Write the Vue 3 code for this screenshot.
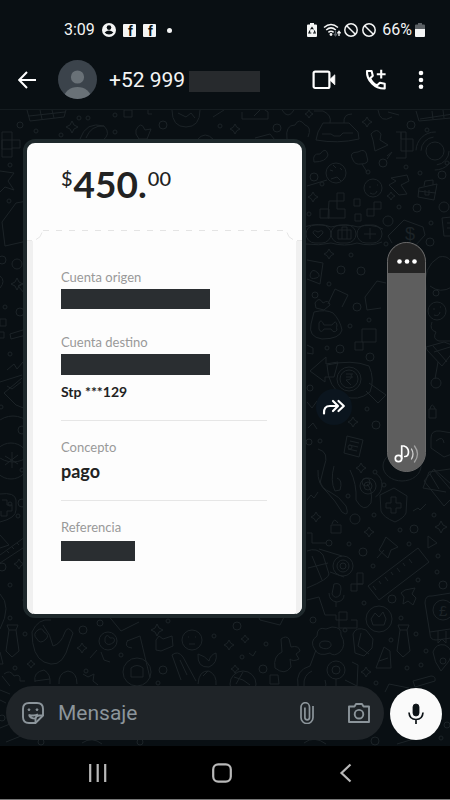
<script setup>
import { ref } from 'vue'

const message = ref('')
const volume = ref(100)

const circles = [
  [20, 125, 3], [36, 131, 2], [79, 118, 2], [88, 118, 2], [61, 135, 2], [115, 115, 2], [115, 132, 2], [163, 125, 4], [220, 126, 2], [277, 128, 4],
  [10, 165, 2], [9, 201, 2], [17, 264, 5], [2, 260, 4], [5, 307, 2], [20, 312, 4], [10, 354, 2], [1, 407, 2], [22, 430, 4], [22, 470, 2], [10, 504, 2], [22, 503, 4], [18, 516, 2], [2, 567, 4], [10, 585, 2], [25, 600, 2],
  [411, 125, 4], [427, 130, 2], [447, 163, 2], [406, 167, 2], [420, 173, 2], [442, 175, 4], [322, 184, 2], [314, 177, 4], [368, 172, 2], [383, 163, 4],
  [399, 207, 2], [417, 208, 4], [444, 207, 5], [388, 221, 5], [431, 223, 2], [430, 242, 4], [386, 244, 2], [309, 214, 2],
  [351, 255, 2], [341, 270, 4], [361, 271, 4], [329, 284, 2], [315, 295, 3], [357, 307, 4], [369, 320, 2], [350, 326, 2], [327, 348, 2], [340, 349, 4], [370, 357, 4], [310, 388, 3],
  [436, 293, 3], [436, 383, 5], [367, 409, 2], [320, 441, 2], [376, 425, 4], [309, 442, 3], [350, 447, 2], [366, 482, 4],
  [348, 496, 2], [384, 485, 2], [375, 472, 2], [355, 519, 5], [374, 515, 2], [414, 529, 4], [400, 530, 2], [434, 515, 2], [329, 543, 3], [349, 544, 2], [363, 552, 4], [409, 544, 2],
  [373, 566, 2], [418, 580, 2], [443, 585, 4], [392, 599, 4], [364, 603, 2], [437, 572, 2], [438, 556, 2], [401, 618, 2], [416, 634, 2], [345, 630, 2], [391, 640, 2], [313, 620, 3],
  [10, 618, 2], [25, 634, 2], [83, 630, 4], [100, 623, 3], [121, 655, 2], [163, 670, 4], [214, 636, 2], [237, 626, 4], [266, 644, 2], [263, 669, 4], [242, 657, 2], [15, 668, 2], [86, 671, 2],
  [376, 683, 2], [407, 668, 2], [421, 665, 2], [426, 651, 2], [158, 683, 2], [168, 621, 2], [41, 742, 3], [140, 742, 3], [375, 741, 4], [447, 725, 3], [441, 738, 2], [2, 718, 3]
]

const stars = [
  [72, 127, 6], [235, 129, 5], [309, 114, 4], [367, 122, 5], [313, 197, 5], [391, 196, 4], [329, 254, 5], [353, 422, 5], [361, 468, 5],
  [316, 517, 5], [369, 532, 5], [441, 527, 6], [17, 284, 6], [157, 630, 6], [82, 648, 5], [229, 645, 5], [245, 639, 4], [235, 669, 4], [31, 664, 4], [366, 672, 5], [19, 564, 5]
]

const ties = [[12, 626], [403, 626]]
const starPath = (x, y, r) =>
  `M${x} ${y - r}Q${x + 1} ${y - 1} ${x + r} ${y}Q${x + 1} ${y + 1} ${x} ${y + r}Q${x - 1} ${y + 1} ${x - r} ${y}Q${x - 1} ${y - 1} ${x} ${y - r}Z`
</script>

<template>
  <div class="screen">
    <header class="top">
      <div class="status">
        <div class="status-left">
          <span class="clock">3:09</span>
          <svg class="glyph" width="14" height="14" viewBox="0 0 14 14" aria-hidden="true">
            <circle cx="7" cy="7" r="7" fill="#f4f5f5" />
            <circle cx="7" cy="4.6" r="2.3" fill="#090f13" />
            <path d="M2.6 9.6Q7 5.6 11.4 9.6Q9.8 11.6 7 11.6T2.6 9.6Z" fill="#090f13" />
          </svg>
          <svg v-for="n in 2" :key="n" class="badge" width="13" height="13" viewBox="0 0 13 13" aria-hidden="true">
            <rect width="13" height="13" rx="1" fill="#f4f5f5" />
            <text x="5" y="12" class="badge-letter">f</text>
          </svg>
          <span class="dot"></span>
        </div>
        <div class="status-right">
          <svg width="10" height="14" viewBox="0 0 10 14" aria-hidden="true">
            <path d="M3 0h4v1.5h2q1 0 1 1V13q0 1-1 1H1q-1 0-1-1V2.500q0-1 1-1h2Z" fill="#f4f5f5" />
            <path d="M3.600 6.500L5 4.500l1.400 2M7.300 7.500L8.200 10H6M4.300 10H1.900L3 7.500" fill="none" stroke="#090f13" stroke-width="1.100" />
          </svg>
          <svg class="wifi" width="18" height="14" viewBox="0 0 18 14" fill="none" aria-hidden="true">
            <path d="M1 4.500Q8 -1.500 15 4.500M3.200 7Q8 2.800 12.800 7M5.400 9.400Q8 7.200 10.600 9.400" stroke="#f4f5f5" stroke-width="1.500" />
            <circle cx="8" cy="11.500" r="1.400" fill="#f4f5f5" />
            <path d="M12.500 8v4.500M11 11l1.500 1.800L14 11" stroke="#596066" stroke-width="1.300" />
            <path d="M16 13V8.500M14.400 10.300L16 8.300l1.600 2" stroke="#f4f5f5" stroke-width="1.300" />
          </svg>
          <svg v-for="n in 2" :key="n" class="ban" width="14" height="14" viewBox="0 0 14 14" fill="none" stroke="#f4f5f5" stroke-width="1.500" aria-hidden="true">
            <circle cx="7" cy="7" r="6.200" />
            <path d="M2.700 2.700l8.600 8.600" />
          </svg>
          <span class="percent">66%</span>
          <svg width="10" height="14" viewBox="0 0 10 14" aria-hidden="true">
            <path d="M3 0h4v1.500h2q1 0 1 1V6H0V2.500q0-1 1-1h2Z" fill="#5b6064" />
            <path d="M0 6h10v7q0 1-1 1H1q-1 0-1-1Z" fill="#f4f5f5" />
          </svg>
        </div>
      </div>

      <div class="appbar">
        <button class="icon-btn" aria-label="Atrás">
          <svg width="18" height="18" viewBox="0 0 18 18" fill="none" stroke="#fff" stroke-width="2">
            <path d="M18 9H1.500M9 1L1.200 9 9 17" />
          </svg>
        </button>
        <svg class="avatar" width="39" height="39" viewBox="0 0 39 39" aria-hidden="true">
          <defs><clipPath id="face"><circle cx="19.500" cy="19.500" r="19.500" /></clipPath></defs>
          <g clip-path="url(#face)">
            <rect width="39" height="39" fill="#3b434b" />
            <circle cx="19.500" cy="17" r="6.600" fill="#697177" />
            <ellipse cx="19.500" cy="38" rx="13.500" ry="11" fill="#697177" />
          </g>
        </svg>
        <h1 class="contact">+52 999</h1>
        <span class="mask mask-name"></span>
        <nav class="actions">
          <button class="icon-btn" aria-label="Videollamada">
            <svg width="24" height="20" viewBox="0 0 24 20" fill="none" stroke="#fff" stroke-width="2.200">
              <rect x="1.600" y="1.600" width="15.800" height="16.400" rx="1.500" />
              <path d="M17.500 9.800l5.300-5v10Z" fill="#fff" stroke-width="0.800" />
            </svg>
          </button>
          <button class="icon-btn" aria-label="Llamar">
            <svg width="22" height="22" viewBox="0 0 22 22" fill="none" stroke="#fff" stroke-width="2.100">
              <path d="M2 2h4.600l1.200 4.800-2.600 2.500q2.300 5.200 7 7l2.700-2.600 4.800 1.100v4.700q-7.500.2-12.600-5Q1.600 9.200 2 2Z" stroke-linejoin="round" />
              <path d="M16.200.8v8.800M11.800 5.200h8.800" />
            </svg>
          </button>
          <button class="icon-btn" aria-label="Más opciones">
            <svg width="10" height="20" viewBox="0 0 10 20" fill="#fff">
              <circle cx="5" cy="3" r="2.300" /><circle cx="5" cy="10" r="2.300" /><circle cx="5" cy="16.700" r="2.300" />
            </svg>
          </button>
        </nav>
      </div>
    </header>

    <main class="chat">
      <svg class="wallpaper" viewBox="0 110 450 636" preserveAspectRatio="xMidYMin slice" aria-hidden="true">
        <circle v-for="(c, i) in circles" :key="'c' + i" :cx="c[0]" :cy="c[1]" :r="c[2]" />
        <path v-for="(s, i) in stars" :key="'s' + i" :d="starPath(s[0], s[1], s[2])" />
        <path v-for="(t, i) in ties" :key="'t' + i" :transform="`translate(${t[0] - 6} ${t[1] - 2})`" d="M1 1h11l-2 5H3ZM3 6L0 27l6 6 7-6-3-21" />

        <path d="M27 110l3 11 34-4 2-7M29 116l36-4M40 110l2 9M52 110l2 8M124 110h8v7h-8ZM148 110v4h4M242 112v7h26v-7l-6-4-8 8M282 110q6 10 12 0M213 117l11-7" />
        <path d="M172 110q0 17 14 17t14-17M178 113l8 4 5-4 4 5M80 139q6-18 24-13 8 8-2 15M86 138q5-13 18-12M136 130q5-10 9 0l6-1-4 10h-8l-3-5ZM197 140q8-10 17 0M287 139q-2-14 8-14 4-8 10 0 7 2 3 12M255 138l15-4 5 6" />
        <path d="M2 132h10v17H2ZM2 140h18v8h-8v9H2ZM0 171l14 2-6 8 6 9-9-3-5 5M2 222l14-19 11-2M2 222l3 24 22-5M0 276q6 5 0 12M25 294l-7-8 7-4M0 319h6v7H0ZM0 332h4v6H0M26 329l-16 5 1 5 15-4M7 370l7-6 3 5 6-7M0 382l22-7M22 378l-18 15 12 12 10 4M7 386l5 3 9-7" />
        <circle cx="13" cy="439" r="23" /><circle cx="11" cy="461" r="18" /><path d="M12 452v16M5 456l13 8M18 455L5 465" />
        <path d="M0 494q15-2 16 6v10q0 8-16 12M2 500h5v5h5v6H7v5H1v-5M0 535l9 10-9 3M0 555l25-18M0 563l26-17M7 551l2 2M12 547l2 2M17 543l2 2M0 594q12 12 0 35" />

        <path d="M318 132l5-9h26l9 9 1 7q-21 5-43 1ZM330 123q2-8-7-12h-9M344 123q-1-9 8-9M322 134h9l3 2h6l3-3h10M378 110q2 14 14 7M388 112l11 3M401 132v19h12v-12h-12ZM396 132h10v26h-10M416 111l3 10 32-3M420 119l33-5M432 111l1 8M443 110l1 8" />
        <path d="M371 134q6-7 10 0l-1 6 8 5-13 6-2-11Z" />
        <circle cx="435" cy="151" r="9" /><circle cx="435" cy="151" r="14" stroke-dasharray="20 24" /><circle cx="435" cy="151" r="19" stroke-dasharray="30 30" />
        <path d="M314 162q-2-9 6-8 6-8 8 1-2 7-14 7ZM353 160q-5-8 5-8 8-5 9 5 3 7-6 7-6 1-8-4ZM362 164l5 8M387 159l5-7-5 4M307 186l20-6" />
        <circle cx="336" cy="173" r="10" /><path d="M330 170l3 1M340 168l2 2M331 179l6-2 4 4M333 165l3 3" />
        <circle cx="373" cy="188" r="9" /><path d="M369 187h2M377 185h1M370 193q5 3 7-2M391 178l16-3 2 6-8 4 6 9-8 1-10-10 7-4ZM419 188l18-4-3 16-16-3ZM424 186l1-5 8-1v5M418 191l18 2M425 190v5h4v-5" />
        <path d="M337 193h7v8h-7ZM329 201h8v8h8v9h-17ZM320 209h9v9h-9ZM354 199h6v7h-6ZM355 214h6v7h-6ZM367 209h7v7h-7ZM374 202h7v7h-7Z" />
        <rect x="306" y="225" width="25" height="18" rx="9" /><rect x="331" y="225" width="25" height="18" rx="9" /><rect x="357" y="225" width="25" height="18" rx="9" /><path d="M304 227q15-5 27 0 15-4 27 0 13-4 25 2M306 244q13 2 25-1 14 4 26 0 14 4 25-1M318 238l-5-5q0-4 5-1 5-3 5 1ZM338 230h13v9h-13ZM342 230v-3h5v3M342 230v9M347 230v9M370 228v11M364 234h12" />
        <path d="M392 243l-4-7 16-16 19 7 2 8-10 11" /><text x="405" y="240" class="mark">$</text>
        <path d="M442 218l9-1M442 218l2 18h8M447 223h4M447 228h4" />

        <path d="M307 260l16 3-3 21-13-5M310 275q2-8 8-2 3 4-2 5-6 2-6-3M328 304l7-15 13 6-6 12M315 303q4-7 8 0 6-4 7 2l-6 5-8-2ZM314 312q12-3 19 1 7 7 9 17-2 9-20 9-14-2-11-15ZM319 323q2-5 5 2h8q4-6 5 0-1 3 0 5-3 4-6-1h-7q-3 5-5 0ZM367 310l-2-13 12-16 9 2M367 310l14-2M362 329h14v13h-14ZM355 342h8v8h-8ZM307 345l6 3v6l-6-1" />
        <path d="M310 371l16-14v7l12-2-4 15h-9v5ZM327 365q25-6 42 1 6 13 1 26-12 10-26 4-16-8-17-31ZM369 383l17 12-8 8-12-12" /><circle cx="349" cy="379" r="12" /><circle cx="349" cy="379" r="9" /><path d="M346 374h7M346 377h7M351 374q2 6-5 6l5 5" />
        <path d="M307 402l5 6 5-7 2 8 6-3-1 8M308 428l5-5 4 6M347 436l16 4-4 17-15-4ZM350 441l9 2M349 445l9 2M348 449l9 2" />
        <path d="M426 290q-4-23 13-33 8-2 12 4M430 286q10 8 22 1" /><circle cx="437" cy="311" r="9" /><path d="M433 309h2M440 307h1M434 315q5 2 6-3M432 322q-3 8 4 10-4 7 3 9h11M427 350l-1-3 18-5 8 3M427 350l15 16 11-14M433 346l14 16M438 362l-3 17M450 347l-16 5M429 409h7v9h-7ZM430 409q2-8 5 0M431 438q0-8 9-7l12 2M431 438v10l13 9 8-3M436 441q7-6 8 2M423 488l6-16 21-3M423 488l23 4M430 474l9 15" />
        <path d="M318 449q12 3 6 18l-4 16M318 470q-1 14 9 22 8 8 15 20 8 6 4-6-7-10-16-14-8-3-10-11M334 466q-4 15 1 25l5-1q3-10-3-12M350 470q7 14 6 30 8 14 15 3 2-13-4-19" /><circle cx="368" cy="486" r="8" /><circle cx="368" cy="486" r="4" /><circle cx="368" cy="485" r="14" stroke-dasharray="14 60" />
        <ellipse cx="402" cy="466" rx="19" ry="15" />
        <path d="M380 495l14-7 13 8-1 17q-2 5-11 9-12-5-14-11ZM391 497h5v6h5v5h-5v5h-5v-5h-5v-5h5ZM413 511l5-3 2 2 6-6M424 481l10-12 17 15M424 481l20 25 8-8M434 470l18 21M307 500l4-5 3 3 4-6M331 525h10v8h-10ZM332 524q2-7 6-1" />
        <path d="M307 533h5v10h14M386 537l12 10-7 3-3 8-9-8 3-5ZM384 550l-7 8M428 536l9 7-9 5Z" /><path d="M368 586l50-38 11 14-50 38ZM373 586l3 4M379 581l2 3M385 577l3 4M391 572l2 3M397 568l3 4M403 563l2 3M409 559l3 4" />
        <path d="M307 551q10-4 16 4l6 19q0 5-22 14M308 568l20-5M312 556l10 24" /><circle cx="343" cy="566" r="10" /><circle cx="343" cy="566" r="6" /><circle cx="343" cy="566" r="3" /><path d="M319 549l23 7M330 572l14 5M357 573h6v11h-6ZM351 584h6v7h-6ZM357 584h6M334 584q7-2 7 5l-1 6q-5 5-8-1ZM329 593q0 8 8 9 7-1 7-7M336 602v5" />
        <path d="M307 600l12-3 6 18h11v5h11v-8h-8v16h18v-8h-6M405 590l10-2-3 6 4 4-3 7-5-4-5 3 1-7-3-4Z" /><circle cx="379" cy="619" r="13" /><path d="M371 619l4-6 4 4 4-5 3 7-2 6h-11ZM425 603q0-8 7-7l19-3M425 603l5 31q0 6 6 6l15-2M430 632l20-3M438 631v12l4-4 4 4v-12" /><circle cx="443" cy="610" r="10" /><text x="439" y="616" class="mark small">£</text>

        <path d="M51 620q-13-2-19 12 0 24 12 30 15 7 22-9 3-9 7-20-5-8-8-1-4 12-12 14-2-11-10-21M38 630q4-3 6 2 6 3 2 7-6 6-9 0-5-5 1-9M107 614l14 17 18-9M128 640q-5 7 4 8M127 641l13-5 10 42M156 640l3-4 4 3 9-3 1 10-12 5-5-1ZM172 655q6-5 11 2l13 24M172 655l9 25M180 660l7 15M198 654q-1 14 11 13 9-4 7-14-6 2-7 8-4-5-11-7" />
        <circle cx="108" cy="641" r="9" /><path d="M105 638q2-5 5 0 6-1 4 4-6 5-9 0ZM97 650l-7 8M101 652l3 8 6 2" /><circle cx="192" cy="640" r="10" /><path d="M188 637h1M195 637h1M189 644h6" />
        <circle cx="137" cy="672" r="14" /><path d="M131 668q6-5 12 0v9h-12ZM35 682q-2-10 9-12 7 4 6 14M35 681l15-2M4 674q6-5 10 2 7-3 6 5h5M2 676l8 10M59 684q-1-11 9-13 9 1 9 13M83 674l5 3 6-3-1 7 5 4M198 684q1-14 11-13 8 4 7 14M208 671l-5 5" />
        <circle cx="243" cy="684" r="13" /><path d="M234 677q10 2 16 8M243 672l-7 12M257 614l3 6 20 5 7-14M270 675h8l1 9h-9ZM249 653l4 3 3-5M281 639q5-4 8 0l2 8q8-2 9 4l-4 3 3 5q-6 3-9 0l1 8q-6 9-16 1-2-12 7-16Z" />
        <path d="M317 636q0-10 9-7l6-2q10 0 9 8 6 10-1 17-6 5-10 1-11 4-15-3-6-9 2-14ZM320 647q-2-6 5-6 7 0 6 5-4 5-11 1M353 634q3-8 13-4l7 9-1 9-8 8-9-3ZM361 633l-3 13 11 8M376 668l8-21 6 4 1 17ZM379 661l9-3" />
        <circle cx="336" cy="670" r="9" /><circle cx="336" cy="670" r="4" /><path d="M336 679v8M298 686q-3-16 12-20l6-16M304 686q-1-11 8-15M325 680q3 9-4 12M352 662l6 3-1 21-12-6M413 681l18-5q5 0 4 5l-20 6ZM385 692l4-8 20 4M433 652q3-9 12-7 10 5 4 16l-8 10q-7-9-8-19Z" /><circle cx="443" cy="661" r="3" />
        <path d="M0 690l10 4M0 700l6 3M0 728l20-8 1 16-15 6M82 743q10-7 20 1M304 743q10-8 22 1M397 744l20-6M0 652l3 12H0" />
      </svg>

      <section class="thread">
        <div class="message">
          <article class="bubble">
            <div class="amount">
              <span class="minor">$</span><span class="major">450.</span><span class="minor">00</span>
            </div>
            <div class="tear">
              <svg width="16" height="12" viewBox="0 0 16 12" fill="none" stroke="#e6e6e6" aria-hidden="true"><path d="M0 11.500h5M9 10.500q5-2 6-7" /></svg>
              <span class="dashes"></span>
              <svg width="16" height="12" viewBox="0 0 16 12" fill="none" stroke="#e6e6e6" aria-hidden="true"><path d="M1 3.500q1 5 6 7M11 11.500h5" /></svg>
            </div>
            <dl class="details">
              <div class="field">
                <dt>Cuenta origen</dt>
                <dd><span class="mask wide"></span></dd>
              </div>
              <div class="field account">
                <dt>Cuenta destino</dt>
                <dd><span class="mask wide"></span></dd>
                <dd class="bank">Stp ***129</dd>
              </div>
              <div class="field ruled">
                <dt>Concepto</dt>
                <dd class="concept">pago</dd>
              </div>
              <div class="field ruled">
                <dt>Referencia</dt>
                <dd><span class="mask short"></span></dd>
              </div>
            </dl>
          </article>
          <button class="forward" aria-label="Reenviar">
            <svg width="24" height="18" viewBox="0 0 24 18" fill="none" stroke="#fff" stroke-width="2.200" stroke-linejoin="round" stroke-linecap="round">
              <path d="M2 15.500Q1.500 8 8 8h7M11 3l5 5-5 5M16.500 3l5.300 5-5.300 5" />
            </svg>
          </button>
        </div>
      </section>

      <aside class="volume">
        <button class="volume-more" aria-label="Ajustes de sonido">
          <svg width="20" height="5" viewBox="0 0 20 5" fill="#fff"><circle cx="2.500" cy="2.500" r="2.300" /><circle cx="10" cy="2.500" r="2.300" /><circle cx="17.500" cy="2.500" r="2.300" /></svg>
        </button>
        <input v-model="volume" class="volume-range" type="range" min="0" max="100" aria-label="Volumen" />
        <svg class="note" width="26" height="21" viewBox="0 0 26 21" fill="none" stroke="#fff" stroke-width="1.700" stroke-linecap="round" aria-hidden="true">
          <circle cx="4.500" cy="15.500" r="3.200" />
          <path d="M7.700 15.500V3H10Q14.500 4.500 14.500 9T10.800 13.500" />
          <path d="M17.500 6q3 5 0 10" stroke="#d0d0d0" stroke-width="1.300" />
          <path d="M20.500 3q6 8 0 16" stroke="#a2a2a2" stroke-width="1.300" />
        </svg>
      </aside>

      <form class="composer" @submit.prevent>
        <div class="pill">
          <button class="icon-btn" type="button" aria-label="Stickers">
            <svg width="22" height="22" viewBox="0 0 22 22" fill="none" stroke="#8c959b" stroke-width="1.900">
              <path d="M7 1h8q6 0 6 6v6.500L13.500 21H7q-6 0-6-6V7q0-6 6-6Z" />
              <path d="M13.500 21v-3.500q0-4 4-4H21M6.500 12.800q6 1.500 9.500-.5M7 13q1 3.500 6.500 3.500" />
              <circle cx="7" cy="7.700" r="0.900" fill="#8c959b" stroke-width="1" /><circle cx="15" cy="7.700" r="0.900" fill="#8c959b" stroke-width="1" />
            </svg>
          </button>
          <input v-model="message" class="entry" type="text" placeholder="Mensaje" aria-label="Mensaje" />
          <button class="icon-btn" type="button" aria-label="Adjuntar">
            <svg width="14" height="22" viewBox="0 0 14 22" fill="none" stroke="#8c959b" stroke-width="1.700">
              <path d="M13 4v11.500a6 6 0 0 1-12 0V5a4.200 4.200 0 0 1 8.500 0v10.500a2.300 2.300 0 0 1-4.600 0V5.500" />
            </svg>
          </button>
          <button class="icon-btn" type="button" aria-label="Cámara">
            <svg width="22" height="20" viewBox="0 0 22 20" fill="none" stroke="#8c959b" stroke-width="1.900">
              <path d="M1 3.500h5.500L8 1h6l1.500 2.500H21V19H1Z" stroke-linejoin="round" />
              <circle cx="11" cy="11.200" r="4.300" />
            </svg>
          </button>
        </div>
        <button class="record" type="button" aria-label="Grabar audio">
          <svg width="16" height="22" viewBox="0 0 16 22" fill="none" stroke="#0c1216" stroke-width="1.700">
            <rect x="5" y="1" width="6" height="12" rx="3" fill="#0c1216" stroke-width="0.800" />
            <path d="M1 9.500q.5 7 7 7t7-7M8 16.500V21" />
          </svg>
        </button>
      </form>
    </main>

    <nav class="system">
      <button class="icon-btn" aria-label="Recientes">
        <svg width="20" height="20" viewBox="0 0 20 20" stroke="#b9b9b9" stroke-width="2.200"><path d="M2.200 1v18M9.700 1v18M17.200 1v18" /></svg>
      </button>
      <button class="icon-btn" aria-label="Inicio">
        <svg width="20" height="20" viewBox="0 0 20 20" fill="none" stroke="#b9b9b9" stroke-width="2.200"><rect x="1.200" y="1.400" width="17.600" height="17.200" rx="5" /></svg>
      </button>
      <button class="icon-btn" aria-label="Volver">
        <svg width="20" height="20" viewBox="0 0 20 20" fill="none" stroke="#b9b9b9" stroke-width="2.200"><path d="M14.500 1.500L5.500 10l9 8.500" /></svg>
      </button>
    </nav>
  </div>
</template>

<style>
body {
  background: #090f13;
}
</style>

<style scoped>
* {
  box-sizing: border-box;
  margin: 0;
}
svg {
  display: block;
  flex: none;
}
button {
  padding: 0;
  border: 0;
  background: none;
  cursor: pointer;
}
.screen {
  display: flex;
  flex-direction: column;
  min-height: 100vh;
  background: #090f13;
  color: #f4f5f5;
  font-family: Roboto, "Liberation Sans", sans-serif;
}
.icon-btn {
  display: flex;
  align-items: center;
  justify-content: center;
}
.top {
  padding-bottom: 10px;
  border-bottom: 1px solid #151c20;
}
.status {
  display: flex;
  justify-content: space-between;
  padding: 20px 25px 0 64px;
  font-size: 16px;
  line-height: 20px;
}
.status-left,
.status-right {
  display: flex;
  align-items: center;
}
.status-left {
  gap: 7px;
}
.badge {
  overflow: visible;
}
.badge-letter {
  fill: #090f13;
  font: bold 14px "Liberation Sans", sans-serif;
}
.dot {
  width: 5px;
  height: 5px;
  margin-left: 4px;
  border-radius: 50%;
  background: #f4f5f5;
}
.status-right {
  gap: 3px;
}
.wifi {
  margin-left: 3px;
}
.ban {
  margin-right: 1px;
}
.percent {
  margin-left: 2px;
}
.appbar {
  display: flex;
  align-items: center;
  padding: 20px 24px 0 18px;
}
.avatar {
  margin: 0 12px 0 22px;
}
.contact {
  font-size: 21px;
  font-weight: 400;
  line-height: 26px;
}
.mask {
  display: block;
  background: #2a2e31;
}
.mask-name {
  width: 71px;
  height: 21px;
  margin-left: 4px;
  margin-top: 3px;
  background: #272a2d;
}
.actions {
  display: flex;
  align-items: center;
  gap: 29px;
  margin-left: auto;
}
.chat {
  position: relative;
  display: flex;
  flex: 1;
  flex-direction: column;
  overflow: hidden;
}
.wallpaper {
  position: absolute;
  inset: 0;
  width: 100%;
  height: 100%;
  fill: none;
  stroke: #1c2327;
  stroke-width: 1;
  stroke-linejoin: round;
}
.mark {
  fill: #1c2327;
  stroke: none;
  font: 18px "Liberation Sans", sans-serif;
}
.mark.small {
  font-size: 15px;
}
.thread {
  position: relative;
  flex: 1;
  padding: 29px 24px 0 23px;
}
.message {
  display: flex;
  align-items: center;
  gap: 10px;
}
.bubble {
  flex: 0 1 283px;
  overflow: hidden;
  border: 4px solid #1e282b;
  border-radius: 12px;
  background: #fdfdfd;
  color: #222;
  font-family: Lato, "Open Sans", sans-serif;
}
.amount {
  display: flex;
  align-items: flex-start;
  gap: 1px;
  padding: 23px 34px 27px;
}
.major {
  font-size: 37px;
  font-weight: 700;
  line-height: 36px;
}
.minor {
  font-size: 20px;
  font-weight: 500;
  line-height: 25px;
}
.tear {
  display: flex;
  align-items: flex-start;
}
.dashes {
  flex: 1;
  height: 1px;
  margin-top: 1px;
  background: repeating-linear-gradient(90deg, #e4e4e4 0 6px, transparent 6px 13px);
}
.details {
  padding: 28px 29px 53px 28px;
  border: solid #f0f0f0;
  border-width: 0 6px;
}
dt {
  margin-bottom: 4px;
  color: #999;
  font-size: 13px;
  line-height: 16px;
}
.account {
  margin-top: 25px;
  padding-bottom: 18px;
}
.wide {
  width: 149px;
  max-width: 100%;
  height: 20px;
}
.account .wide {
  height: 21px;
}
.short {
  width: 74px;
  height: 20px;
  margin-top: 6px;
}
.bank {
  margin-top: 7px;
  font-size: 14px;
  font-weight: 700;
  line-height: 20px;
}
.concept {
  padding-bottom: 17px;
  font-size: 18px;
  font-weight: 700;
  line-height: 24px;
}
.ruled {
  padding-top: 18px;
  border-top: 1px solid #e6e6e6;
}
.forward {
  display: flex;
  align-items: center;
  justify-content: center;
  width: 36px;
  height: 36px;
  margin-top: 57px;
  border-radius: 50%;
  background: #0b151e;
}
.volume {
  position: absolute;
  top: 132px;
  right: 24px;
  display: flex;
  flex-direction: column;
  width: 39px;
  height: 230px;
  overflow: hidden;
  border: 1px solid #6a6a6a;
  border-radius: 20px;
  background: #5e5e5e;
}
.volume-more {
  display: flex;
  align-items: center;
  justify-content: center;
  height: 30px;
  padding-top: 6px;
  background: #242424;
}
.volume-range {
  flex: 1;
  width: 100%;
  min-height: 0;
  appearance: none;
  background: #5e5e5e;
  writing-mode: vertical-lr;
  direction: rtl;
}
.volume-range::-webkit-slider-thumb {
  appearance: none;
  width: 37px;
  height: 8px;
  background: transparent;
}
.note {
  position: absolute;
  right: 5px;
  bottom: 7px;
}
.composer {
  position: relative;
  display: flex;
  align-items: flex-end;
  gap: 6px;
  padding: 0 8px 6px 6px;
}
.pill {
  display: flex;
  flex: 1;
  align-items: center;
  gap: 14px;
  min-width: 0;
  height: 54px;
  padding: 0 14px 0 16px;
  border-radius: 27px;
  background: #1f2428;
}
.pill .icon-btn:last-child {
  margin-left: 20px;
}
.entry {
  flex: 1;
  min-width: 0;
  padding: 0;
  border: 0;
  outline: 0;
  background: none;
  color: #e9edef;
  font: 21px/28px Roboto, "Liberation Sans", sans-serif;
}
.entry::placeholder {
  color: #8c959b;
  opacity: 1;
}
.record {
  display: flex;
  flex: none;
  align-items: center;
  justify-content: center;
  width: 52px;
  height: 52px;
  border-radius: 50%;
  background: #fafafa;
}
.system {
  display: grid;
  grid-template-columns: repeat(3, 1fr);
  justify-items: center;
  align-items: center;
  height: 54px;
  padding: 0 42px 0 36px;
  border-bottom: 1px solid #777;
  background: #000;
}
</style>
